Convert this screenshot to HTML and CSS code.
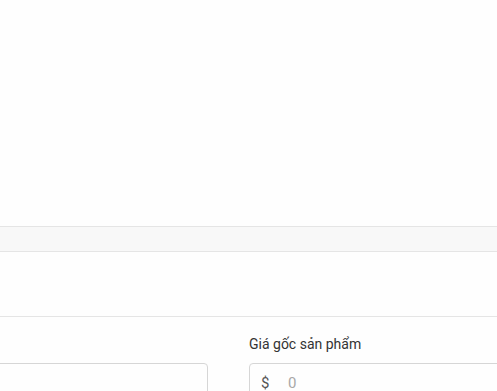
FILE: index.html
```html
<!DOCTYPE html>
<html lang="vi">
<head>
    <meta charset="UTF-8">
    <meta name="viewport" content="width=device-width, initial-scale=1.0">
    <title>Sản phẩm</title>
    <link rel="stylesheet" href="styles.css">
</head>
<body>
    <div class="preview"></div>
    <div class="toolbar"></div>
    <div class="section"></div>
    <div class="form-row">
        <div class="field">
            <label class="field-label">&nbsp;</label>
            <div class="input-box"></div>
        </div>
        <div class="field">
            <label class="field-label">Giá gốc sản phẩm</label>
            <div class="input-box">
                <span class="prefix">$</span>
                <span class="placeholder">0</span>
            </div>
        </div>
    </div>
</body>
</html>
```

FILE: styles.css
```css
* {
    box-sizing: border-box;
    margin: 0;
    padding: 0;
}
html, body {
    font-family: Roboto, "Liberation Sans", sans-serif;
    background-color: #fefefe;
    overflow: hidden;
    width: 100%;
    height: 100%;
}
.preview {
    height: 226px;
}
.toolbar {
    height: 26px;
    background: #f8f8f8;
    border-top: 1px solid #e5e5e5;
    border-bottom: 1px solid #e5e5e5;
}
.section {
    height: 65px;
    border-bottom: 1px solid #e5e5e5;
}
.form-row {
    display: grid;
    grid-template-columns: 250px 260px;
    gap: 41px;
    margin-left: -42px;
    padding-top: 18px;
}
.field-label {
    display: block;
    font-size: 14px;
    font-weight: 400;
    color: #333;
    line-height: 18px;
    height: 18px;
    margin-bottom: 10px;
}
.input-box {
    height: 40px;
    border: 1px solid #d6d6d6;
    border-radius: 4px;
    display: flex;
    align-items: center;
    padding: 0 11px;
    font-size: 15px;
}
.prefix {
    color: #555;
    width: 27px;
}
.placeholder {
    color: #a8a8a8;
}
```
